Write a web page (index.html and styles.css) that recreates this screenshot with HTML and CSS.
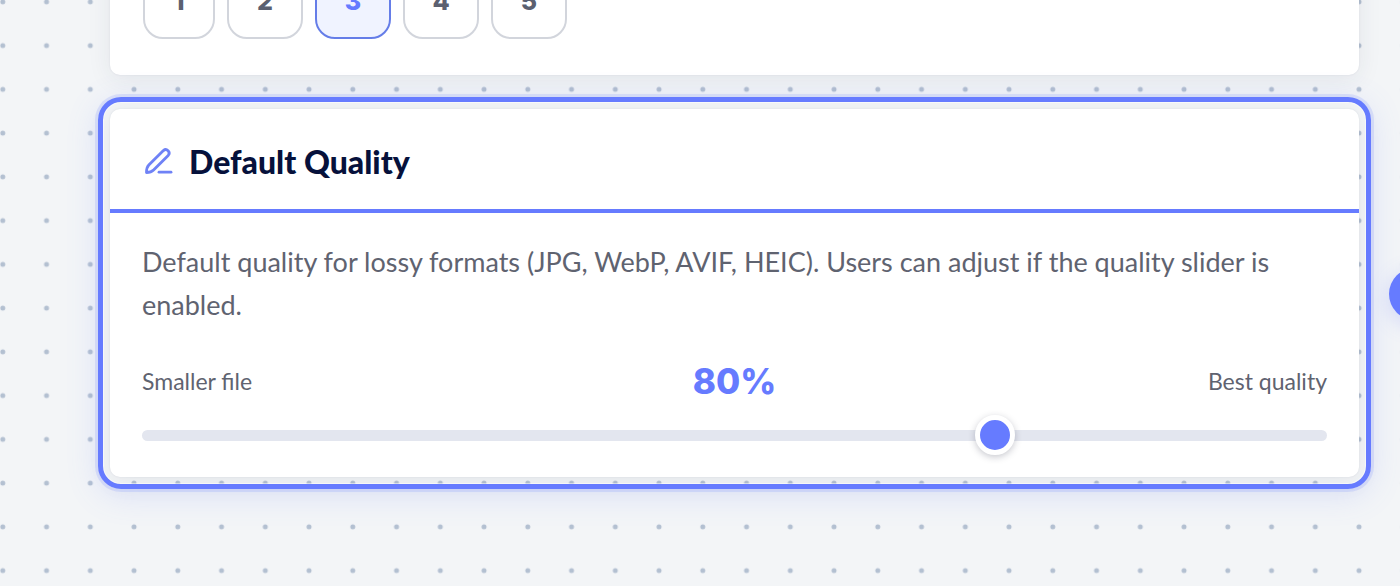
FILE: index.html
```html
<!DOCTYPE html>
<html lang="en">
<head>
<meta charset="utf-8">
<meta name="viewport" content="width=device-width, initial-scale=1">
<title>Default Quality</title>
<link rel="stylesheet" href="styles.css">
</head>
<body>
<main class="page">
  <section class="card card-steps" aria-label="Steps">
    <div class="choices">
      <button type="button" class="choice choice-narrow">1</button>
      <button type="button" class="choice">2</button>
      <button type="button" class="choice choice-active" aria-pressed="true">3</button>
      <button type="button" class="choice">4</button>
      <button type="button" class="choice">5</button>
    </div>
  </section>
  <section class="card card-selected">
    <header class="card-header">
      <svg class="pen" viewBox="0 0 32 32" aria-hidden="true"><path d="M4.500 26.500c0-3.400.5-5.600 2.300-7.400L21.400 4.600a3.400 3.400 0 0 1 4.800 4.800L11.600 24c-1.800 1.800-3.700 2.500-7.100 2.500z"/><path d="M17 26.200h12"/></svg>
      <h2 class="title">Default Quality</h2>
    </header>
    <div class="card-body">
      <p class="description">Default quality for lossy formats (JPG, WebP, AVIF, HEIC). Users can adjust if the quality slider is enabled.</p>
      <div class="scale">
        <label class="scale-label" for="quality">Smaller file</label>
        <output class="value" for="quality">80%</output>
        <span class="scale-label scale-end">Best quality</span>
      </div>
      <input class="slider" id="quality" type="range" min="0" max="110" value="80">
    </div>
  </section>
  <button type="button" class="handle" aria-label="Add"></button>
</main>
</body>
</html>
```
FILE: styles.css
```css
* { box-sizing: border-box; }
html, body { margin: 0; height: 100%; }
body {
  font-family: Lato, "Liberation Sans", sans-serif;
  color: #5f6370;
  overflow: hidden;
}
.page {
  position: relative;
  min-height: 100%;
  overflow: hidden;
  padding: 0 41px 109px 110px;
  background-color: #f3f5f7;
  background-image: url("data:image/svg+xml,%3Csvg xmlns='http://www.w3.org/2000/svg' width='175' height='175' viewBox='0 0 175 175'%3E%3Cdefs%3E%3Cpattern id='d' width='43.75' height='43.75' patternUnits='userSpaceOnUse'%3E%3Ccircle cx='21.8' cy='21.8' r='2.5' fill='%23b3c0d1'/%3E%3C/pattern%3E%3C/defs%3E%3Crect width='175' height='175' fill='url(%23d)'/%3E%3C/svg%3E");
  background-size: 175px 175px;
  background-position: -19px -20px;
}
.card {
  position: relative;
  background: #fff;
  border-radius: 10px;
  box-shadow: 0 0 2px rgba(40, 50, 90, .1), 0 4px 24px rgba(40, 50, 80, .08);
}
.card-steps {
  margin-top: -35px;
  margin-bottom: 34px;
  padding: 0 33px 36px;
}
.choices { display: flex; gap: 12px; }
.choice {
  width: 76px;
  height: 74px;
  padding: 0 0 2px;
  border: 2px solid #d2d5dc;
  border-radius: 20px;
  background: #fff;
  color: #5b6070;
  font: 800 25px/32px Inter, Lato, sans-serif;
}
.choice-narrow { width: 72px; }
.choice-active {
  border-color: #657de8;
  background: #f0f3ff;
  color: #667bff;
}
.card-selected::before {
  content: "";
  position: absolute;
  inset: -12px;
  border: 5px solid #667bff;
  border-radius: 23px;
  box-shadow: 0 0 0 3px rgba(102, 123, 255, .16), 0 6px 32px rgba(102, 123, 255, .17), inset 0 0 0 1px rgba(255, 255, 255, .5);
  pointer-events: none;
}
.card-header {
  display: flex;
  align-items: center;
  gap: 15px;
  height: 104px;
  padding: 6px 32px 0;
  border-bottom: 4px solid #667bff;
}
.pen {
  width: 32px;
  height: 32px;
  fill: none;
  stroke: #6f82f6;
  stroke-width: 2.8;
  stroke-linecap: round;
  stroke-linejoin: round;
}
.title {
  margin: 0;
  color: #06113b;
  font-size: 32px;
  font-weight: 900;
  line-height: 40px;
}
.card-body { padding: 27px 32px 22px; }
.description {
  margin: 0;
  font-size: 27px;
  line-height: 43px;
}
.scale {
  display: grid;
  grid-template-columns: 1fr auto 1fr;
  align-items: center;
  height: 40px;
  margin: 35px 0 14px;
  font-size: 23px;
  line-height: 32px;
}
.scale-end { text-align: right; }
.value {
  color: #667bff;
  font-family: Inter, Lato, sans-serif;
  font-size: 35px;
  font-weight: 800;
  line-height: 40px;
}
.slider {
  -webkit-appearance: none;
  appearance: none;
  display: block;
  width: 100%;
  height: 40px;
  margin: 0;
  background: transparent;
}
.slider::-webkit-slider-runnable-track {
  height: 11px;
  border-radius: 6px;
  background: #e3e6ef;
}
.slider::-webkit-slider-thumb {
  -webkit-appearance: none;
  width: 40px;
  height: 40px;
  margin-top: -15px;
  border: 5px solid #fff;
  border-radius: 50%;
  background: #667bff;
  box-shadow: 0 2px 7px rgba(30, 35, 60, .25);
}
.handle {
  position: absolute;
  top: 268px;
  right: -41px;
  width: 52px;
  height: 52px;
  padding: 0;
  border: 0;
  border-radius: 50%;
  background: #667bff;
  box-shadow: 0 5px 20px rgba(102, 123, 255, .25);
}
```
